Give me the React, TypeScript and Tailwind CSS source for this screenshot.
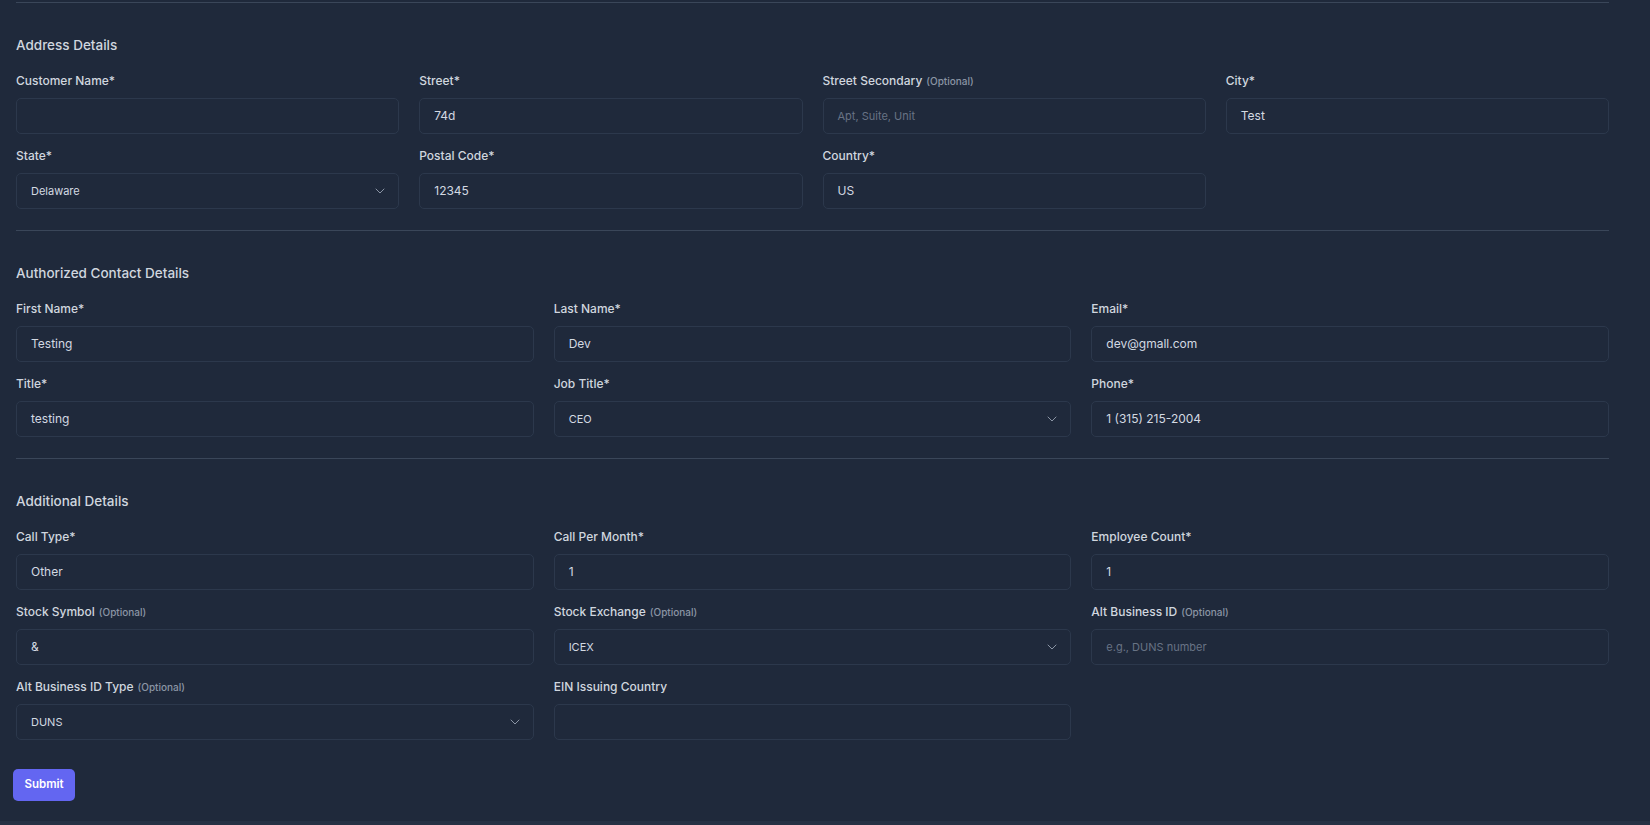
import React from "react";
import { ChevronDown } from "lucide-react";

type Field = {
  label: string;
  optional?: boolean;
  value?: string;
  placeholder?: string;
  select?: boolean;
};

function FieldBox({ f }: { f: Field }) {
  return (
    <div className="flex flex-col">
      <div className="h-4 mb-[9px] flex items-baseline text-[12px] leading-4 font-medium text-[#d0d6df] whitespace-nowrap">
        {f.label}
        {f.optional && (
          <span className="ml-1 text-[10px] font-medium text-[#8b95a5]">(Optional)</span>
        )}
      </div>
      {f.select ? (
        <div className="h-9 rounded-[5px] border border-[#2c384c] flex items-center justify-between pl-[14px] pr-[10px]">
          <span className="text-[11px] text-[#d3d9e2]">{f.value}</span>
          <ChevronDown size={16} strokeWidth={1.5} className="text-[#8b95a5]" />
        </div>
      ) : (
        <div className="h-9 rounded-[5px] border border-[#2c384c] flex items-center px-[14px]">
          {f.value ? (
            <span className="text-[12px] text-[#d3d9e2]">{f.value}</span>
          ) : f.placeholder ? (
            <span className="text-[11px] text-[#687385]">{f.placeholder}</span>
          ) : null}
        </div>
      )}
    </div>
  );
}

function Section({
  title,
  cols,
  fields,
  last,
  children,
}: {
  title: string;
  cols: 3 | 4;
  fields: (Field | null)[];
  last?: boolean;
  children?: React.ReactNode;
}) {
  return (
    <section className={`border-t border-[#3a4659] pt-8 ${last ? "pb-5" : "pb-[21px]"}`}>
      <h2 className="text-[13.5px] leading-5 font-medium text-[#d0d6df] mb-[18px]">{title}</h2>
      <div
        className={`grid gap-x-5 gap-y-[14px] ${cols === 4 ? "grid-cols-4" : "grid-cols-3"}`}
      >
        {fields.map((f, i) => (f ? <FieldBox key={i} f={f} /> : <div key={i} />))}
      </div>
      {children}
    </section>
  );
}

export default function App() {
  return (
    <div
      className="h-[825px] flex flex-col bg-[#263144]"
      style={{ fontFamily: "Inter, 'Noto Sans', sans-serif" }}
    >
      <div className="h-[821px] bg-[#1f293b] pt-[2px] pl-4 pr-[41px]">
        <Section
          title="Address Details"
          cols={4}
          fields={[
            { label: "Customer Name*" },
            { label: "Street*", value: "74d" },
            { label: "Street Secondary", optional: true, placeholder: "Apt, Suite, Unit" },
            { label: "City*", value: "Test" },
            { label: "State*", value: "Delaware", select: true },
            { label: "Postal Code*", value: "12345" },
            { label: "Country*", value: "US" },
            null,
          ]}
        />
        <Section
          title="Authorized Contact Details"
          cols={3}
          fields={[
            { label: "First Name*", value: "Testing" },
            { label: "Last Name*", value: "Dev" },
            { label: "Email*", value: "dev@gmall.com" },
            { label: "Title*", value: "testing" },
            { label: "Job Title*", value: "CEO", select: true },
            { label: "Phone*", value: "1 (315) 215-2004" },
          ]}
        />
        <Section
          title="Additional Details"
          cols={3}
          last
          fields={[
            { label: "Call Type*", value: "Other" },
            { label: "Call Per Month*", value: "1" },
            { label: "Employee Count*", value: "1" },
            { label: "Stock Symbol", optional: true, value: "&" },
            { label: "Stock Exchange", optional: true, value: "ICEX", select: true },
            { label: "Alt Business ID", optional: true, placeholder: "e.g., DUNS number" },
            { label: "Alt Business ID Type", optional: true, value: "DUNS", select: true },
            { label: "EIN Issuing Country" },
            null,
          ]}
        >
          <button className="mt-[29px] -ml-[3px] h-8 w-[62px] rounded-[5px] bg-[#6366f1] text-white text-[11.5px] font-semibold flex items-center justify-center">
            Submit
          </button>
        </Section>
      </div>
    </div>
  );
}
